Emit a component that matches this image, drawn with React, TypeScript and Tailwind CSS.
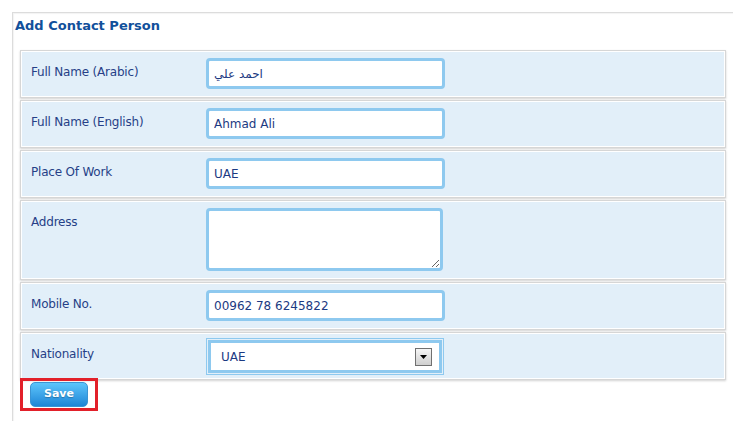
import { useState } from 'react';

const font = "font-['DejaVu_Sans',sans-serif]";

function Row({ label, tall, children }: { label: string; tall?: boolean; children: React.ReactNode }) {
  return (
    <div
      className={`flex border border-[#d6d6d6] bg-[#e2eff9] shadow-[inset_0_0_0_1px_#ffffff,0_1px_2px_rgba(0,0,0,0.18)] ${tall ? 'h-[80px]' : 'h-[48px]'}`}
    >
      <div className="w-[185px] shrink-0 pl-[10px] pt-[13px] text-[12px] leading-[16px] tracking-[-0.2px] text-[#263f87]">{label}</div>
      <div className="pt-[7px]">{children}</div>
    </div>
  );
}

function TextInput({ value }: { value: string }) {
  const [v, setV] = useState(value);
  return (
    <input
      value={v}
      onChange={(e) => setV(e.target.value)}
      className={`${font} block w-[239px] h-[31px] rounded-[4px] border-[3px] border-[#8ec9ef] bg-white px-[5px] text-[12px] text-[#1c3a82] outline-none`}
    />
  );
}

export default function App() {
  return (
    <div className={`${font} w-[733px] h-[421px] overflow-hidden bg-white pl-3 pt-3`}>
      <div className="h-full border-l border-t border-[#dcdcdc] shadow-[inset_1px_1px_1px_rgba(0,0,0,0.05)]">
        <h1 className="pl-[2px] pt-[3px] text-[13px] font-bold leading-[20px] text-[#11509b]">Add Contact Person</h1>

        <div className="ml-[7px] mt-[14px] flex w-[706px] flex-col gap-[2px]">
          <Row label="Full Name (Arabic)">
            <TextInput value="احمد علي" />
          </Row>
          <Row label="Full Name (English)">
            <TextInput value="Ahmad Ali" />
          </Row>
          <Row label="Place Of Work">
            <TextInput value="UAE" />
          </Row>
          <Row label="Address" tall>
            <textarea
              className={`${font} block h-[63px] w-[237px] rounded-[4px] border-[3px] border-[#8ec9ef] bg-white px-[5px] text-[12px] text-[#1c3a82] outline-none`}
            />
          </Row>
          <Row label="Mobile No.">
            <TextInput value="00962 78 6245822" />
          </Row>
          <Row label="Nationality">
            <div className="-mt-[2px] w-[238px] border border-[#8ec9ef] p-[1px]">
              <div className="flex h-[33px] items-center justify-between border-[3px] border-[#8ec9ef] bg-white pl-[10px] pr-[7px]">
                <span className="text-[12px] text-[#1c3a82]">UAE</span>
                <span className="flex h-[18px] w-[17px] items-center justify-center border border-[#707070] bg-gradient-to-b from-[#f6f6f6] to-[#cfcfcf]">
                  <svg width="7" height="4" viewBox="0 0 7 4">
                    <path d="M0 0h7L3.5 4z" fill="#000" />
                  </svg>
                </span>
              </div>
            </div>
          </Row>
        </div>

        <div className="ml-[7px] mt-[-2px] inline-block border-[3px] border-[#e2202a] px-[7px] py-[1px]">
          <button className="block h-[25px] w-[58px] rounded-[5px] border border-[#3a94d4] bg-gradient-to-b from-[#5cc5fb] to-[#1c86d6] text-[11px] font-bold text-white [text-shadow:0_1px_1px_rgba(0,0,0,0.25)]">
            Save
          </button>
        </div>
      </div>
    </div>
  );
}
